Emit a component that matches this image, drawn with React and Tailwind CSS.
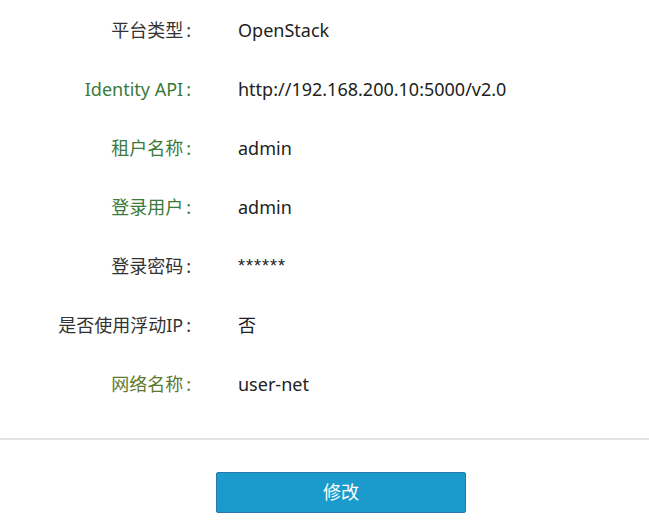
import React from 'react';

const rows = [
    { label: '平台类型', value: 'OpenStack', color: 'text-[#333333]' },
    { label: 'Identity API', value: 'http://192.168.200.10:5000/v2.0', color: 'text-[#3b7a3b]' },
    { label: '租户名称', value: 'admin', color: 'text-[#3b7a3b]' },
    { label: '登录用户', value: 'admin', color: 'text-[#3b7a3b]' },
    { label: '登录密码', value: '******', color: 'text-[#333333]', mask: true },
    { label: '是否使用浮动IP', value: '否', color: 'text-[#333333]' },
    { label: '网络名称', value: 'user-net', color: 'text-[#5c7a30]' },
];

export default function App() {
    return (
        <div className="w-[649px] h-[532px] bg-white text-[#333333] text-[18px] font-['Noto_Sans','Noto_Sans_CJK_SC',sans-serif] overflow-hidden">
            {/* Detail rows */}
            <div className="flex flex-col pt-[1px]">
                {rows.map((row) => (
                    <div key={row.label} className="flex items-center h-[59px]">
                        <div className={`w-[191px] text-right shrink-0 ${row.color}`}>
                            {row.label}<span className="ml-[3px]">:</span>
                        </div>
                        <div
                            className={`ml-[47px] text-[#222222] ${
                                row.mask ? "font-['Liberation_Sans',sans-serif] tracking-[1px]" : ''
                            }`}
                        >
                            {row.value}
                        </div>
                    </div>
                ))}
            </div>

            <div className="mt-[24px] h-[2px] bg-[#e2e2e2]"></div>

            <div className="mt-[32px] pl-[216px]">
                <button className="w-[250px] h-[41px] bg-[#1a9bcb] border border-[#2878ad] rounded-[2px] text-white text-[18px]">
                    修改
                </button>
            </div>
        </div>
    );
}
